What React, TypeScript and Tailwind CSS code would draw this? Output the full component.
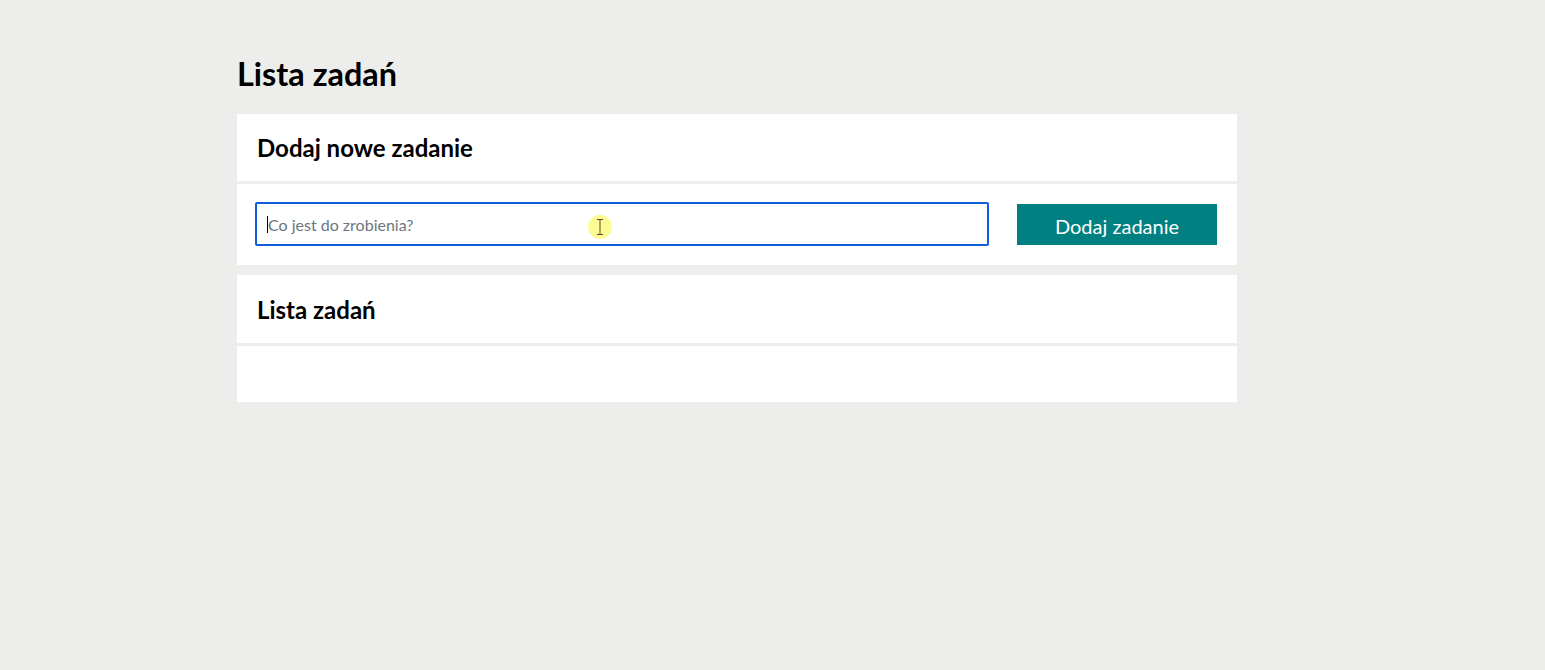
import { useState } from 'react';

export default function App() {
  const [task, setTask] = useState('');
  const [tasks, setTasks] = useState<string[]>([]);

  const handleAdd = () => {
    if (!task.trim()) return;
    setTasks(prev => [...prev, task.trim()]);
    setTask('');
  };

  return (
    <div
      className="min-h-[670px] bg-[#ededeb] text-black"
      style={{ fontFamily: 'Lato, "Liberation Sans", sans-serif' }}
    >
      <div className="w-[1000px] ml-[237px] pt-[55px]">
        <h1 className="text-[32.4px] leading-[38px] font-bold mb-[21px]">Lista zadań</h1>

        {/* Add task card */}
        <div className="flex flex-col gap-[3px]">
          <div className="bg-white h-[67px] px-5 flex items-center">
            <h2 className="text-[24px] font-bold leading-[29px]">Dodaj nowe zadanie</h2>
          </div>
          <div className="bg-white h-[81px] pl-[18px] pr-5 flex items-center gap-[28px]">
            <div className="relative flex-1 -mt-px">
              <input
                type="text"
                value={task}
                onChange={(e) => setTask(e.target.value)}
                placeholder="Co jest do zrobienia?"
                className="w-full h-[44px] border-2 border-[#0b5ed7] rounded-[2px] px-[11px] text-[16px] outline-none placeholder:text-[#6c757d]"
                style={{ fontFamily: 'Lato, "Liberation Sans", sans-serif' }}
              />
              {task === '' && (
                <span className="absolute left-[12px] top-[14px] w-px h-[17px] bg-black" />
              )}
              {/* cursor highlight */}
              <span className="absolute left-[333px] top-[13px] w-[24px] h-[24px] rounded-full bg-[#fbfb7a]/80 flex items-center justify-center">
                <svg width="8" height="16" viewBox="0 0 8 16" fill="none" stroke="#6b4a2b" strokeWidth="1">
                  <path d="M1 0.5h6M4 0.5v15M1 15.5h6" />
                </svg>
              </span>
            </div>
            <button
              onClick={handleAdd}
              className="w-[200px] h-[41px] bg-[#008080] text-white text-[20px] pt-[2px] shrink-0"
              style={{ fontFamily: 'Lato, "Liberation Sans", sans-serif' }}
            >
              Dodaj zadanie
            </button>
          </div>
        </div>

        {/* Task list card */}
        <div className="flex flex-col gap-[3px] mt-[10px]">
          <div className="bg-white h-[68px] px-5 flex items-center">
            <h2 className="text-[24px] font-bold leading-[29px]">Lista zadań</h2>
          </div>
          <div className="bg-white min-h-[56px] px-5">
            {tasks.map((t, i) => (
              <div key={i} className="py-3 text-[16px]">{t}</div>
            ))}
          </div>
        </div>
      </div>
    </div>
  );
}
